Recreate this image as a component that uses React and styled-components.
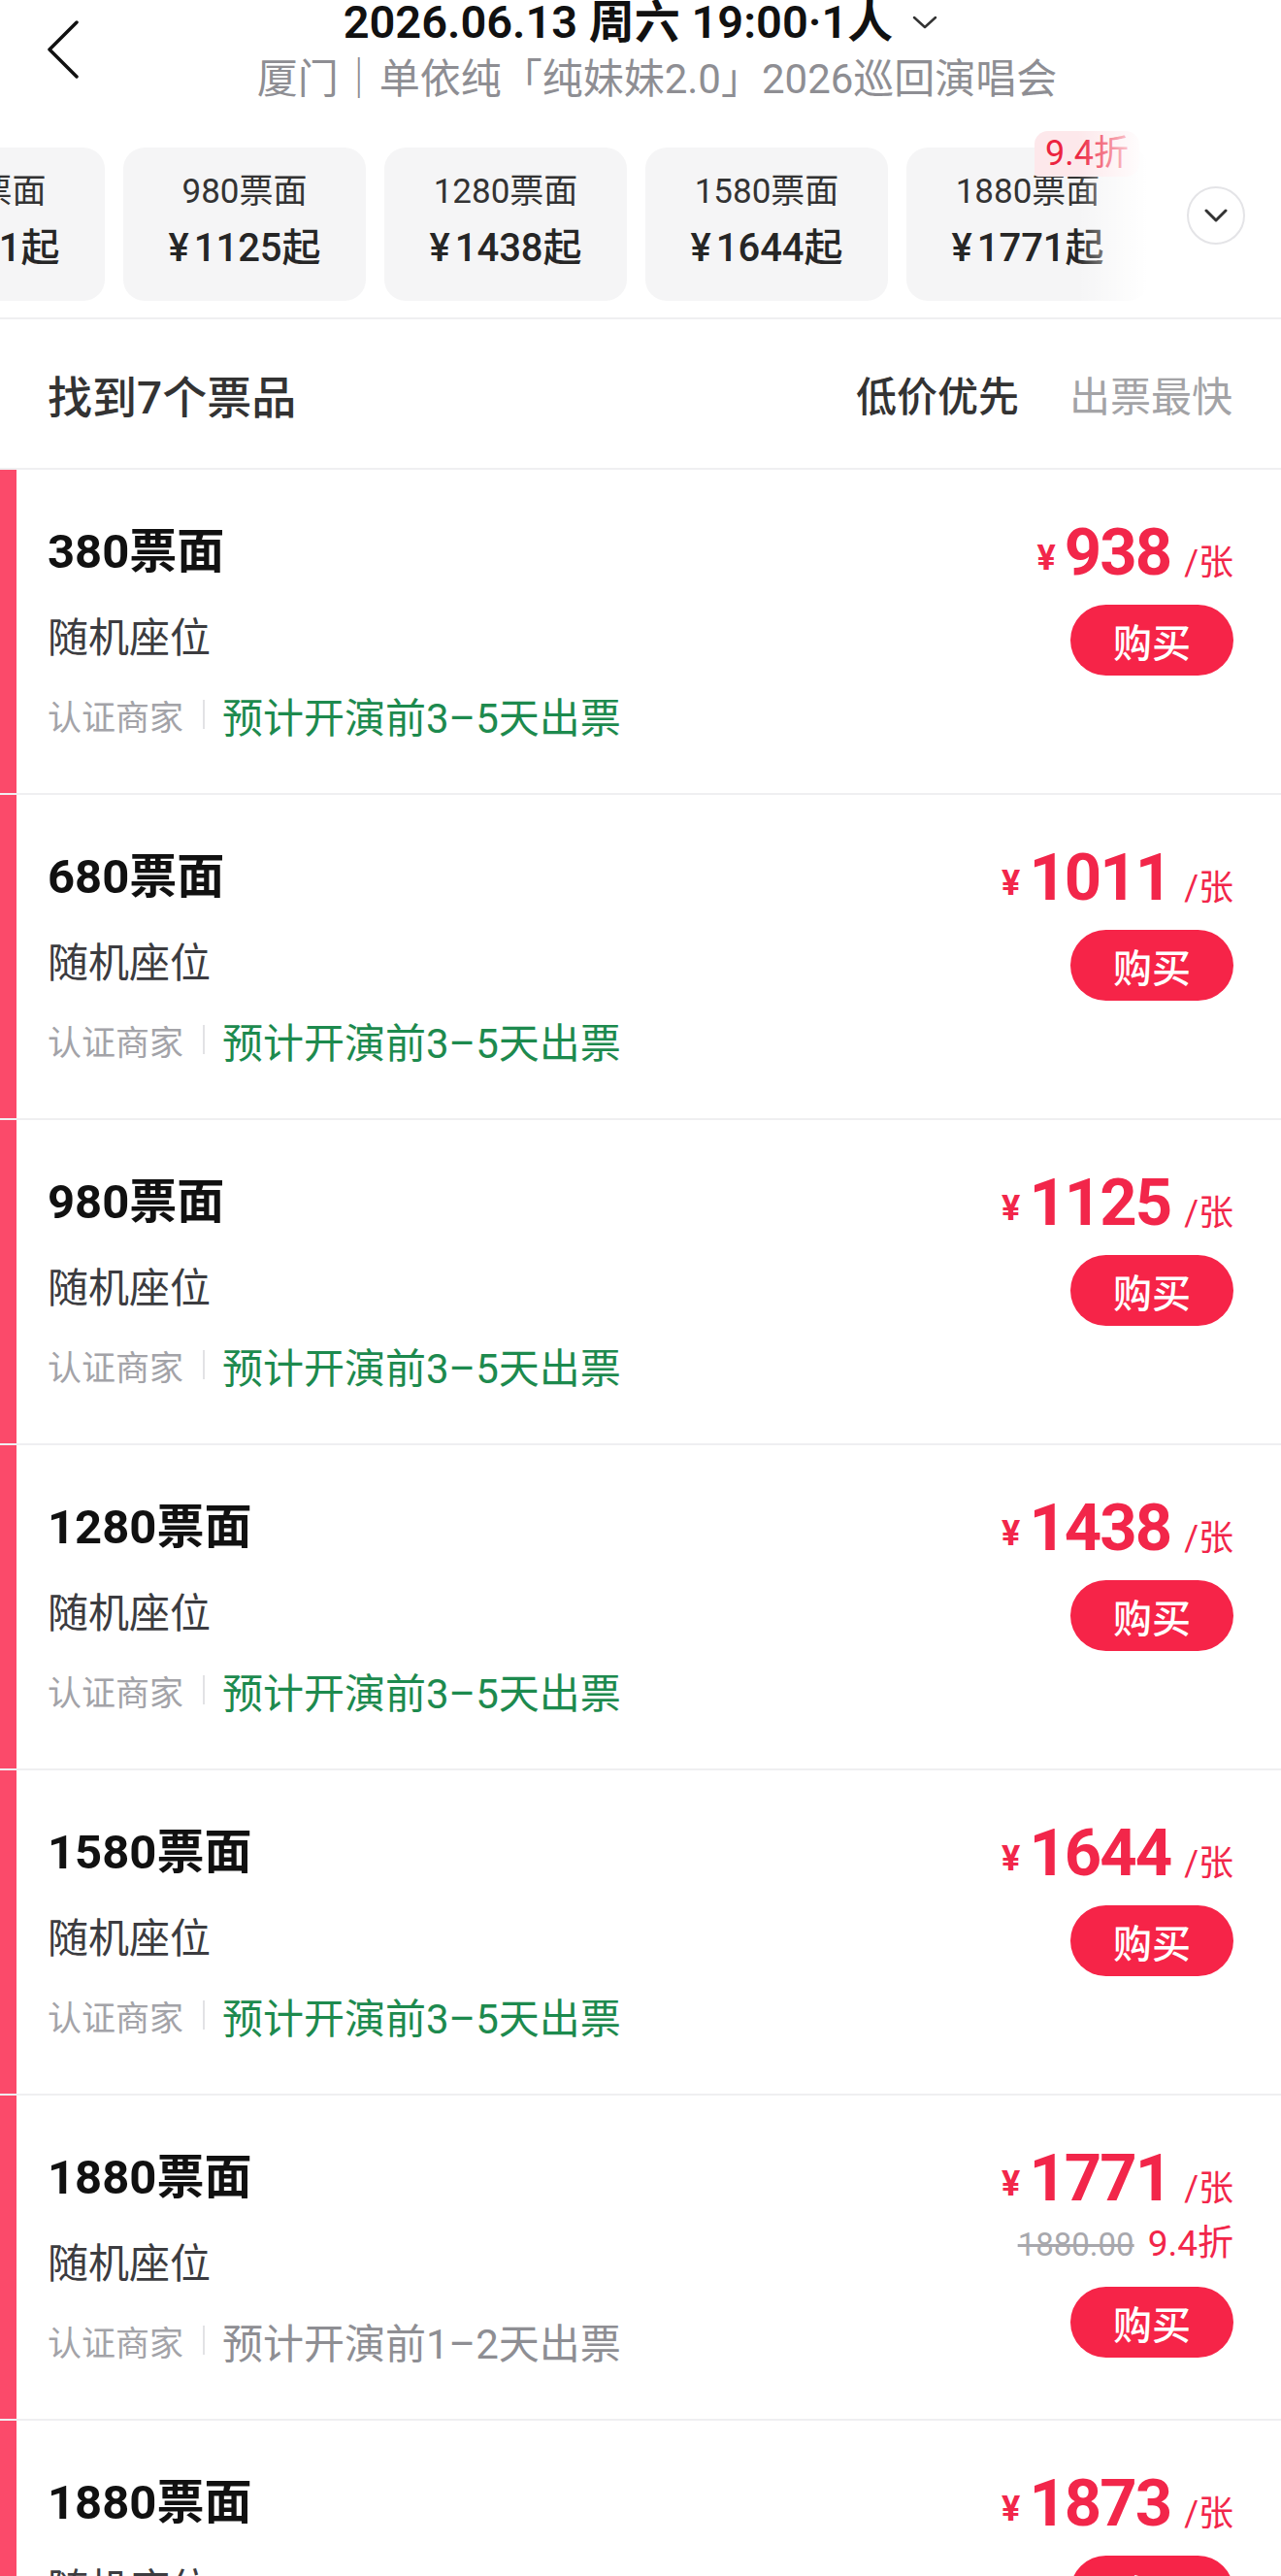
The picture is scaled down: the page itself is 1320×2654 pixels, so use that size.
import React, { useLayoutEffect, useRef } from "react";
import styled, { createGlobalStyle } from "styled-components";

const GlobalStyle = createGlobalStyle`
  html, body {
    margin: 0;
    padding: 0;
    background: #fff;
  }
  body {
    font-family: Roboto, "Noto Sans CJK SC", sans-serif;
    color: #333;
  }
  * {
    box-sizing: border-box;
  }
`;

const tiers = [
  { face: 380, from: 938 },
  { face: 680, from: 1011 },
  { face: 980, from: 1125 },
  { face: 1280, from: 1438 },
  { face: 1580, from: 1644 },
  { face: 1880, from: 1771, badge: "9.4折" },
];

const tickets = [
  { face: 380, price: 938, eta: "预计开演前3–5天出票", fast: true },
  { face: 680, price: 1011, eta: "预计开演前3–5天出票", fast: true },
  { face: 980, price: 1125, eta: "预计开演前3–5天出票", fast: true },
  { face: 1280, price: 1438, eta: "预计开演前3–5天出票", fast: true },
  { face: 1580, price: 1644, eta: "预计开演前3–5天出票", fast: true },
  {
    face: 1880,
    price: 1771,
    original: "1880.00",
    rate: "9.4折",
    eta: "预计开演前1–2天出票",
    fast: false,
  },
  { face: 1880, price: 1873, eta: "预计开演前3–5天出票", fast: true },
];

const App = () => {
  const stripRef = useRef(null);

  // the price strip is scrolled a bit to the right in the screenshot
  useLayoutEffect(() => {
    if (stripRef.current) stripRef.current.scrollLeft = 411;
  }, []);

  return (
    <Page>
      <GlobalStyle />
      <Header>
        <BackButton aria-label="返回">
          <svg width="34" height="60" viewBox="0 0 34 60">
            <path
              d="M31 2 L3 30 L31 58"
              fill="none"
              stroke="#111"
              strokeWidth="3.5"
              strokeLinecap="round"
              strokeLinejoin="round"
            />
          </svg>
        </BackButton>
        <TitleBlock>
          <TitleRow>
            <Title>2026.06.13 周六 19:00·1人</Title>
            <svg width="26" height="14" viewBox="0 0 26 14">
              <path
                d="M2 2 L13 12 L24 2"
                fill="none"
                stroke="#333"
                strokeWidth="2.5"
                strokeLinecap="round"
                strokeLinejoin="round"
              />
            </svg>
          </TitleRow>
          <Subtitle>厦门｜单依纯「纯妹妹2.0」2026巡回演唱会</Subtitle>
        </TitleBlock>
        <div />
      </Header>

      <TierSection>
        <TierStrip ref={stripRef}>
          {tiers.map((t) => (
            <TierCard key={t.face}>
              {t.badge && <TierBadge>{t.badge}</TierBadge>}
              <TierFace>{t.face}票面</TierFace>
              <TierPrice>
                <span>¥</span>
                {t.from}起
              </TierPrice>
            </TierCard>
          ))}
        </TierStrip>
        <MorePanel>
          <ExpandButton aria-label="展开">
            <svg width="24" height="14" viewBox="0 0 24 14">
              <path
                d="M2 2 L12 12 L22 2"
                fill="none"
                stroke="#333"
                strokeWidth="3"
                strokeLinecap="round"
                strokeLinejoin="round"
              />
            </svg>
          </ExpandButton>
        </MorePanel>
      </TierSection>

      <SortBar>
        <Count>找到7个票品</Count>
        <SortOptions>
          <SortOption $active>低价优先</SortOption>
          <SortOption>出票最快</SortOption>
        </SortOptions>
      </SortBar>

      <TicketList>
        {tickets.map((t, i) => (
          <TicketRow key={i}>
            <Accent />
            <TicketBody>
              <Info>
                <FaceTitle>{t.face}票面</FaceTitle>
                <Seat>随机座位</Seat>
                <Tags>
                  <Merchant>认证商家</Merchant>
                  <Sep />
                  <Eta $fast={t.fast}>{t.eta}</Eta>
                </Tags>
              </Info>
              <PriceCol>
                <PriceLine>
                  <Yen>¥</Yen>
                  <Amount>{t.price}</Amount>
                  <Unit>/张</Unit>
                </PriceLine>
                {t.original && (
                  <DiscountLine>
                    <Original>{t.original}</Original>
                    <Rate>{t.rate}</Rate>
                  </DiscountLine>
                )}
                <BuyButton>购买</BuyButton>
              </PriceCol>
            </TicketBody>
          </TicketRow>
        ))}
      </TicketList>
    </Page>
  );
};

const Page = styled.div`
  width: 1320px;
  height: 2654px;
  overflow: hidden;
  background: #fff;
`;

// Header
const Header = styled.header`
  height: 125px;
  display: grid;
  grid-template-columns: 1fr auto 1fr;
  align-items: start;
`;

const BackButton = styled.button`
  justify-self: start;
  margin: 21px 0 0 48px;
  padding: 0;
  border: none;
  background: none;
  display: flex;
`;

const TitleBlock = styled.div`
  display: flex;
  flex-direction: column;
  align-items: center;
`;

const TitleRow = styled.div`
  display: flex;
  align-items: center;
  gap: 20px;
`;

const Title = styled.div`
  font-size: 47px;
  font-weight: 600;
  line-height: 46px;
  color: #111;
  white-space: nowrap;
`;

const Subtitle = styled.div`
  margin: 11px 0 0 34px;
  font-size: 42px;
  line-height: 50px;
  color: #8e8e93;
  white-space: nowrap;
`;

// Price tiers strip
const TierSection = styled.section`
  position: relative;
  border-bottom: 2px solid #efeff1;
`;

const TierStrip = styled.div`
  display: flex;
  gap: 19px;
  overflow-x: auto;
  padding: 27px 170px 17px 0;
  scrollbar-width: none;
  &::-webkit-scrollbar {
    display: none;
  }
`;

const TierCard = styled.div`
  position: relative;
  flex: none;
  width: 250px;
  height: 158px;
  border-radius: 22px;
  background: #f5f5f6;
  display: flex;
  flex-direction: column;
  align-items: center;
  padding-top: 24px;
`;

const TierFace = styled.div`
  font-size: 35px;
  line-height: 44px;
  color: #333;
  white-space: nowrap;
`;

const TierPrice = styled.div`
  margin-top: 11px;
  font-size: 40px;
  font-weight: 500;
  line-height: 50px;
  color: #262626;
  white-space: nowrap;
  span {
    margin-right: 5px;
  }
`;

const TierBadge = styled.div`
  position: absolute;
  top: -17px;
  right: 10px;
  height: 47px;
  padding: 0 11px;
  border-radius: 14px 14px 14px 4px;
  background: #fde8eb;
  color: #ec2440;
  font-size: 36px;
  line-height: 47px;
  white-space: nowrap;
`;

const MorePanel = styled.div`
  position: absolute;
  top: 0;
  right: 0;
  bottom: 0;
  width: 210px;
  background: linear-gradient(
    to right,
    rgba(255, 255, 255, 0) 0,
    #fff 72px
  );
  display: flex;
  align-items: center;
  justify-content: flex-end;
  padding: 0 37px 8px 0;
`;

const ExpandButton = styled.button`
  width: 60px;
  height: 60px;
  padding: 0;
  border-radius: 50%;
  border: 2.5px solid #e4e4e7;
  background: #fff;
  display: flex;
  align-items: center;
  justify-content: center;
`;

// Sort bar
const SortBar = styled.div`
  height: 155px;
  display: flex;
  align-items: center;
  justify-content: space-between;
  padding: 0 50px 0 49px;
  border-bottom: 2px solid #efeff1;
`;

const Count = styled.div`
  font-size: 46px;
  font-weight: 500;
  color: #333;
`;

const SortOptions = styled.div`
  display: flex;
  gap: 52px;
`;

const SortOption = styled.div`
  font-size: 42px;
  font-weight: ${(p) => (p.$active ? 500 : 400)};
  color: ${(p) => (p.$active ? "#333" : "#a3a3a6")};
`;

// Ticket list
const TicketList = styled.div`
  display: flex;
  flex-direction: column;
`;

const TicketRow = styled.div`
  flex: none;
  height: 335px;
  display: flex;
  border-bottom: 2px solid #efeff1;
`;

const Accent = styled.div`
  width: 17px;
  flex: none;
  background: #fb4a6a;
`;

const TicketBody = styled.div`
  flex: 1;
  display: flex;
  justify-content: space-between;
  align-items: flex-start;
  padding: 55px 49px 0 32px;
`;

const Info = styled.div`
  display: flex;
  flex-direction: column;
`;

const FaceTitle = styled.div`
  font-size: 49px;
  font-weight: 700;
  line-height: 60px;
  color: #111;
`;

const Seat = styled.div`
  margin-top: 32px;
  font-size: 42px;
  line-height: 54px;
  color: #3c3c40;
`;

const Tags = styled.div`
  margin-top: 24px;
  height: 54px;
  display: flex;
  align-items: center;
`;

const Merchant = styled.span`
  font-size: 35px;
  color: #a3a3a8;
`;

const Sep = styled.span`
  width: 2px;
  height: 30px;
  margin: 0 18px 0 20px;
  background: #e2e2e5;
`;

const Eta = styled.span`
  font-size: 42px;
  color: ${(p) => (p.$fast ? "#1d8a4e" : "#8e8e93")};
`;

const PriceCol = styled.div`
  display: flex;
  flex-direction: column;
  align-items: flex-end;
`;

const PriceLine = styled.div`
  font-size: 36px;
  line-height: 40px;
  color: #f2264a;
  white-space: nowrap;
`;

const Yen = styled.span`
  font-size: 36px;
  font-weight: 700;
  vertical-align: 5px;
  margin-right: 9px;
`;

const Amount = styled.span`
  font-size: 67px;
  font-weight: 700;
  line-height: 60px;
  letter-spacing: -2px;
`;

const Unit = styled.span`
  margin-left: 14px;
`;

const DiscountLine = styled.div`
  margin: 6px 0 12px;
  height: 40px;
  display: flex;
  align-items: baseline;
  gap: 14px;
  white-space: nowrap;
`;

const Original = styled.span`
  font-size: 33px;
  color: #a8a8ad;
  text-decoration: line-through;
`;

const Rate = styled.span`
  font-size: 37px;
  color: #f2264a;
`;

const BuyButton = styled.button`
  margin-top: 23px;
  width: 168px;
  height: 73px;
  border: none;
  border-radius: 37px;
  background: #f62448;
  color: #fff;
  font-family: inherit;
  font-size: 40px;
  font-weight: 500;
  display: flex;
  align-items: center;
  justify-content: center;
  padding: 0;
`;

export default App;
